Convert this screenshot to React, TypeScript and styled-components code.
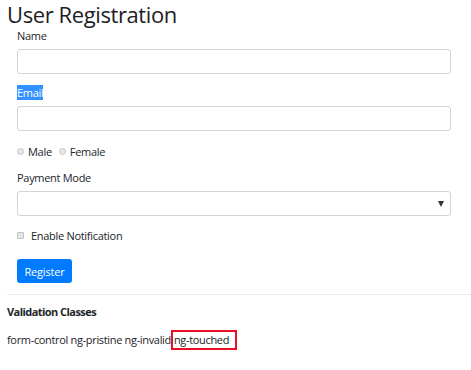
import React from "react";
import styled, { createGlobalStyle } from "styled-components";

const Global = createGlobalStyle`
  html, body {
    margin: 0;
    padding: 0;
    background: #ffffff;
  }
  body {
    font-family: "Open Sans", "Noto Sans", sans-serif;
    color: #212529;
  }
`;

const Page = styled.div`
  width: 471px;
  height: 370px;
  overflow: hidden;
  padding-left: 7px;
  box-sizing: border-box;
`;

const Title = styled.h1`
  margin: 0;
  font-size: 22px;
  line-height: 28px;
  font-weight: 500;
  letter-spacing: -0.4px;
  color: #1d2125;
`;

const Form = styled.form`
  width: 434px;
  margin-left: 10px;
  display: flex;
  flex-direction: column;
  letter-spacing: -0.3px;
`;

const Label = styled.label<{ $top?: number }>`
  display: block;
  margin-top: ${(p) => p.$top ?? 0}px;
  margin-bottom: 5px;
  font-size: 11px;
  line-height: 16px;
`;

const Selected = styled.span`
  background: #3390ff;
  color: #ffffff;
`;

const Input = styled.input`
  box-sizing: border-box;
  width: 100%;
  height: 25px;
  margin: 0;
  border: 1px solid #ced4da;
  border-radius: 3px;
  background: #ffffff;
`;

const Row = styled.div<{ $top: number }>`
  display: flex;
  align-items: center;
  height: 16px;
  margin-top: ${(p) => p.$top}px;
  font-size: 11px;
`;

const Radio = styled.span`
  box-sizing: border-box;
  width: 7px;
  height: 7px;
  border-radius: 50%;
  border: 1px solid #c4c4c4;
  background: #e9e9e9;
  margin-right: 4px;
`;

const Check = styled.span`
  box-sizing: border-box;
  width: 7px;
  height: 7px;
  border: 1px solid #c4c4c4;
  border-radius: 1px;
  background: #e6e6e6;
  margin-right: 7px;
`;

const Option = styled.span`
  margin-right: 7px;
`;

const SelectWrap = styled.div`
  position: relative;
  width: 100%;
  height: 25px;
`;

const Select = styled.div`
  box-sizing: border-box;
  width: 100%;
  height: 25px;
  border: 1px solid #ced4da;
  border-radius: 3px;
`;

const Caret = styled.span`
  position: absolute;
  right: 7px;
  top: 10px;
  width: 0;
  height: 0;
  border-left: 3px solid transparent;
  border-right: 3px solid transparent;
  border-top: 6px solid #333333;
`;

const Button = styled.button`
  align-self: flex-start;
  margin-top: 16px;
  width: 55px;
  height: 24px;
  padding: 0;
  border: none;
  border-radius: 3px;
  background: #007bff;
  color: #ffffff;
  font-family: inherit;
  font-size: 11px;
  letter-spacing: -0.2px;
`;

const Divider = styled.hr`
  margin: 11px 0 0 0;
  border: none;
  border-top: 1px solid #eaeaea;
`;

const Heading = styled.h5`
  margin: 9px 0 0 0;
  font-size: 11px;
  line-height: 16px;
  font-weight: 700;
  letter-spacing: -0.55px;
`;

const Classes = styled.div`
  margin-top: 10px;
  font-size: 11px;
  line-height: 20px;
  white-space: nowrap;
  letter-spacing: -0.33px;
`;

const Marked = styled.span`
  display: inline-block;
  line-height: 16px;
  border: 2px solid #e81123;
  padding: 0 6px 0 1px;
  margin-left: 0;
`;

export default function App() {
  return (
    <Page>
      <Global />
      <Title>User Registration</Title>
      <Form onSubmit={(e) => e.preventDefault()}>
        <Label>Name</Label>
        <Input />

        <Label $top={11}>
          <Selected>Email</Selected>
        </Label>
        <Input />

        <Row $top={12}>
          <Radio />
          <Option>Male</Option>
          <Radio />
          <Option>Female</Option>
        </Row>

        <Label $top={11}>Payment Mode</Label>
        <SelectWrap>
          <Select />
          <Caret />
        </SelectWrap>

        <Row $top={11}>
          <Check />
          <span>Enable Notification</span>
        </Row>

        <Button type="submit">Register</Button>
      </Form>
      <Divider />
      <Heading>Validation Classes</Heading>
      <Classes>
        form-control ng-pristine ng-invalid<Marked>ng-touched</Marked>
      </Classes>
    </Page>
  );
}
